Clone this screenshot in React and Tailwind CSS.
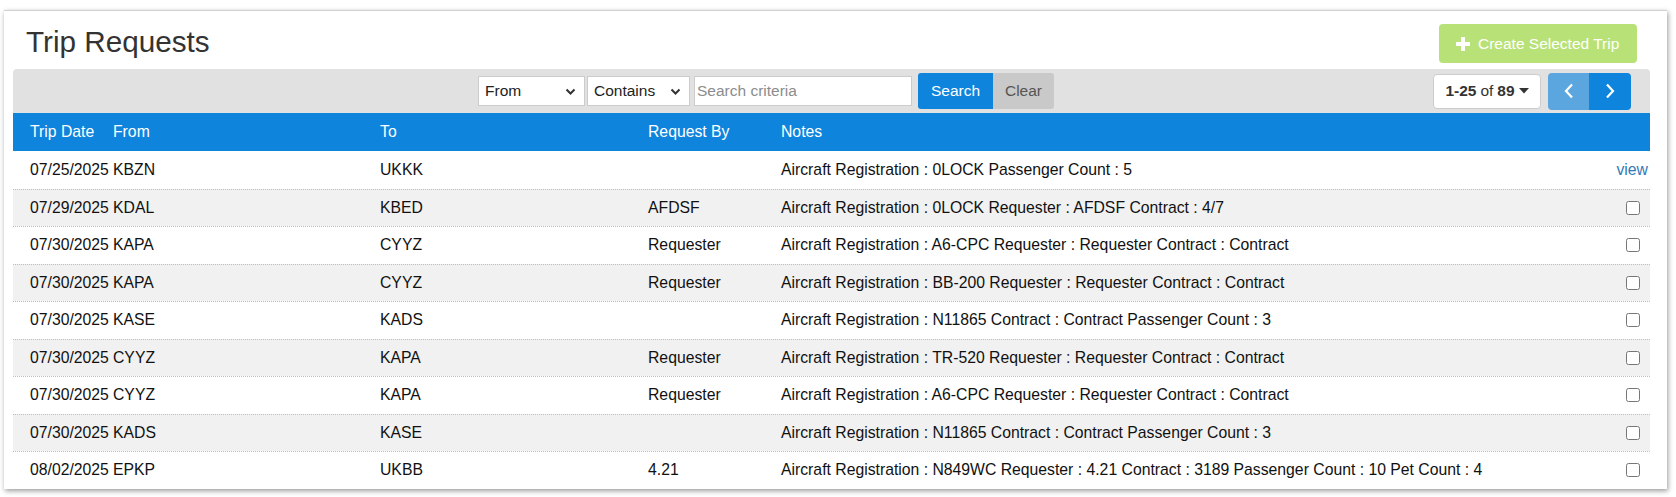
import React from "react";

const rows = [
    ["07/25/2025", "KBZN", "UKKK", "", "Aircraft Registration : 0LOCK Passenger Count : 5", true],
    ["07/29/2025", "KDAL", "KBED", "AFDSF", "Aircraft Registration : 0LOCK Requester : AFDSF Contract : 4/7"],
    ["07/30/2025", "KAPA", "CYYZ", "Requester", "Aircraft Registration : A6-CPC Requester : Requester Contract : Contract"],
    ["07/30/2025", "KAPA", "CYYZ", "Requester", "Aircraft Registration : BB-200 Requester : Requester Contract : Contract"],
    ["07/30/2025", "KASE", "KADS", "", "Aircraft Registration : N11865 Contract : Contract Passenger Count : 3"],
    ["07/30/2025", "CYYZ", "KAPA", "Requester", "Aircraft Registration : TR-520 Requester : Requester Contract : Contract"],
    ["07/30/2025", "CYYZ", "KAPA", "Requester", "Aircraft Registration : A6-CPC Requester : Requester Contract : Contract"],
    ["07/30/2025", "KADS", "KASE", "", "Aircraft Registration : N11865 Contract : Contract Passenger Count : 3"],
    ["08/02/2025", "EPKP", "UKBB", "4.21", "Aircraft Registration : N849WC Requester : 4.21 Contract : 3189 Passenger Count : 10 Pet Count : 4"],
];

const ChevronDown = () => (
    <svg width="11" height="8" viewBox="0 0 11 8" className="absolute right-[8px] top-[11px] pointer-events-none">
        <polyline points="1.5,1.5 5.5,5.5 9.5,1.5" fill="none" stroke="#333" strokeWidth="2" />
    </svg>
);

const FakeSelect = ({ label, width }) => (
    <div className={`relative h-[30px] bg-white border border-[#ccc] ${width}`}>
        <span className="block pl-[6px] leading-[28px] text-[15.5px] text-[#222]">{label}</span>
        <ChevronDown />
    </div>
);

const App = () => {
    return (
        <div className="w-[1676px] h-[497px] bg-white pt-[10px] pl-[4px] font-['Liberation_Sans',Arial,sans-serif] text-[#333]">
            <div className="w-[1663px] h-[479px] bg-white border-t border-[#d0d0d0] shadow-[1px_2px_5px_rgba(0,0,0,0.4)] pl-[9px] pr-[17px]">
                {/* title row */}
                <div className="flex items-start h-[58px]">
                    <h2 className="ml-[13px] mt-[16px] text-[29.7px] leading-none font-normal text-[#333]">
                        Trip Requests
                    </h2>
                    <button
                        type="button"
                        className="ml-auto mr-[13px] mt-[13px] h-[39px] w-[198px] flex items-center pl-[16px] rounded-[4px] bg-[#b8e277] text-white text-[15.5px]"
                    >
                        <svg width="16" height="16" viewBox="0 0 16 16" className="mr-[7px]">
                            <path d="M6 1h4v5h5v4h-5v5H6v-5H1V6h5z" fill="#fff" />
                        </svg>
                        Create Selected Trip
                    </button>
                </div>

                {/* toolbar */}
                <div className="h-[44px] bg-[#e1e1e1] rounded-t-[4px] flex items-center">
                    <div className="ml-[465px] flex items-center">
                        <FakeSelect label="From" width="w-[107px]" />
                        <div className="ml-[2px]">
                            <FakeSelect label="Contains" width="w-[103px]" />
                        </div>
                        <input
                            type="text"
                            placeholder="Search criteria"
                            className="ml-[4px] h-[30px] w-[218px] bg-white border border-[#ccc] pl-[2px] text-[15.5px] placeholder:text-[#8c8c8c] outline-none"
                        />
                        <button type="button" className="ml-[6px] h-[36px] w-[75px] bg-[#0e84dc] text-white text-[15.5px] rounded-l-[3px]">
                            Search
                        </button>
                        <button type="button" className="h-[36px] w-[61px] bg-[#c9c9c9] text-[#555] text-[15.5px] rounded-r-[3px]">
                            Clear
                        </button>
                    </div>
                    <div className="ml-auto mr-[19px] flex items-center">
                        <div className="h-[35px] w-[108px] bg-white border border-[#ccc] rounded-[4px] flex items-center justify-center text-[15.5px] text-[#333]">
                            <span className="font-bold">1-25</span>
                            <span className="mx-[4px]">of</span>
                            <span className="font-bold">89</span>
                            <svg width="10" height="6" viewBox="0 0 10 6" className="ml-[4px]">
                                <polygon points="0,0 10,0 5,5.5" fill="#333" />
                            </svg>
                        </div>
                        <div className="ml-[7px] flex h-[37px] rounded-[4px] overflow-hidden">
                            <button type="button" className="w-[41px] h-full bg-[#5ca6df] flex items-center justify-center">
                                <svg width="12" height="16" viewBox="0 0 12 16">
                                    <polyline points="9,1.5 3,8 9,14.5" fill="none" stroke="#fff" strokeWidth="2.2" />
                                </svg>
                            </button>
                            <button type="button" className="w-[42px] h-full bg-[#0e84dc] flex items-center justify-center">
                                <svg width="12" height="16" viewBox="0 0 12 16">
                                    <polyline points="3,1.5 9,8 3,14.5" fill="none" stroke="#fff" strokeWidth="2.2" />
                                </svg>
                            </button>
                        </div>
                    </div>
                </div>

                {/* header */}
                <div className="h-[38px] bg-[#0e84dc] text-white text-[15.75px] flex items-center">
                    <div className="w-[100px] pl-[17px]">Trip Date</div>
                    <div className="w-[267px]">From</div>
                    <div className="w-[268px]">To</div>
                    <div className="w-[133px]">Request By</div>
                    <div className="flex-1">Notes</div>
                </div>

                {/* rows */}
                {rows.map((r, i) => (
                    <div
                        key={i}
                        className={`h-[37.5px] flex items-center text-[15.75px] text-[#111] ${
                            i % 2 === 1 ? "bg-[#f1f1f1]" : "bg-white"
                        } ${i > 0 ? "border-t border-dotted border-[#bdbdbd]" : ""}`}
                    >
                        <div className="w-[100px] pl-[17px]">{r[0]}</div>
                        <div className="w-[267px]">{r[1]}</div>
                        <div className="w-[268px]">{r[2]}</div>
                        <div className="w-[133px]">{r[3]}</div>
                        <div className="flex-1">{r[4]}</div>
                        {r[5] ? (
                            <a href="#" className="pr-[2px] text-[#337ab7]">view</a>
                        ) : (
                            <input type="checkbox" className="mr-[10px] w-[14px] h-[14px] m-0" />
                        )}
                    </div>
                ))}
            </div>
        </div>
    );
};

export default App;
